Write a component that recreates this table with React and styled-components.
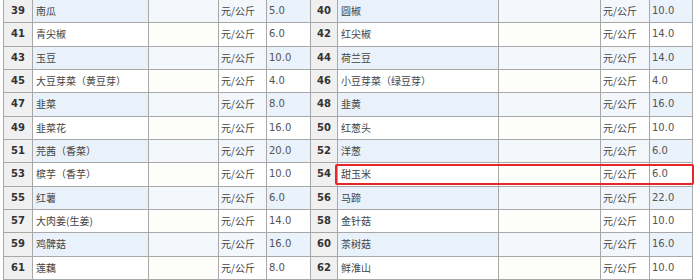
import React from "react";
import styled, { createGlobalStyle, css } from "styled-components";

const Global = createGlobalStyle`
  html, body { margin: 0; padding: 0; background: #fff; }
  body { width: 700px; height: 280px; overflow: hidden; }
`;

const Wrap = styled.div`
  position: relative;
  padding-left: 3px;
  margin-top: -1px;
`;

const Table = styled.table`
  border-collapse: collapse;
  table-layout: fixed;
  width: 690px;
`;

const Row = styled.tr`
  height: 23.33px;
`;

const cellBase = css`
  border: 1px solid #a8a8a8;
  padding: 0 0 0 2px;
  white-space: nowrap;
  overflow: hidden;
  vertical-align: middle;
  line-height: 14px;
`;

const NumCell = styled.td`
  ${cellBase};
  padding: 0;
  text-align: center;
  background: #f0f0f0;
  font-family: "DejaVu Sans", Verdana, sans-serif;
  font-weight: bold;
  font-size: 10px;
  color: #333;
`;

const TextCell = styled.td`
  ${cellBase};
  padding-left: 3px;
  font-family: "Noto Sans CJK SC", "Noto Sans", sans-serif;
  font-size: 10px;
  color: #444;
  background: ${(p) => (p.$striped ? "#e9f1fa" : "#ffffff")};
`;

const BlankCell = styled.td`
  ${cellBase};
  background: ${(p) => (p.$striped ? "#f4f8fc" : "#fdfdf9")};
`;

const UnitCell = styled.td`
  ${cellBase};
  font-family: "Noto Sans CJK SC", "Noto Sans", sans-serif;
  font-size: 10px;
  color: #444;
  background: ${(p) => (p.$striped ? "#f3f7fc" : "#ffffff")};
`;

const ValueCell = styled.td`
  ${cellBase};
  font-family: "DejaVu Sans", Verdana, sans-serif;
  font-size: 10px;
  color: #555;
  background: ${(p) => (p.$striped ? "#eaf2fb" : "#ffffff")};
`;

const Highlight = styled.div`
  position: absolute;
  left: 335px;
  top: 165px;
  width: 359px;
  height: 21px;
  border: 2px solid #e5262a;
  border-radius: 2px;
  box-sizing: border-box;
  pointer-events: none;
`;

const rows = [
  [39, "南瓜", "5.0", 40, "圆椒", "10.0"],
  [41, "青尖椒", "6.0", 42, "红尖椒", "14.0"],
  [43, "玉豆", "10.0", 44, "荷兰豆", "14.0"],
  [45, "大豆芽菜（黄豆芽）", "4.0", 46, "小豆芽菜（绿豆芽）", "4.0"],
  [47, "韭菜", "8.0", 48, "韭黄", "16.0"],
  [49, "韭菜花", "16.0", 50, "红葱头", "10.0"],
  [51, "芫茜（香菜）", "20.0", 52, "洋葱", "6.0"],
  [53, "槟芋（香芋）", "10.0", 54, "甜玉米", "6.0"],
  [55, "红薯", "6.0", 56, "马蹄", "22.0"],
  [57, "大肉姜(生姜)", "14.0", 58, "金针菇", "10.0"],
  [59, "鸡髀菇", "16.0", 60, "茶树菇", "16.0"],
  [61, "莲藕", "8.0", 62, "鲜淮山", "10.0"],
];

const widths = [29, 116, 70, 48, 44, 27, 161, 102, 49, 43];

export default function App() {
  return (
    <>
      <Global />
      <Wrap>
        <Table>
          <colgroup>
            {widths.map((w, i) => (
              <col key={i} style={{ width: w }} />
            ))}
          </colgroup>
          <tbody>
            {rows.map(([n1, a, v1, n2, b, v2], i) => {
              const s = i % 2 === 0;
              return (
                <Row key={n1}>
                  <NumCell>{n1}</NumCell>
                  <TextCell $striped={s}>{a}</TextCell>
                  <BlankCell $striped={s} />
                  <UnitCell $striped={s}>元/公斤</UnitCell>
                  <ValueCell $striped={s}>{v1}</ValueCell>
                  <NumCell>{n2}</NumCell>
                  <TextCell $striped={s}>{b}</TextCell>
                  <BlankCell $striped={s} />
                  <UnitCell $striped={s}>元/公斤</UnitCell>
                  <ValueCell $striped={s}>{v2}</ValueCell>
                </Row>
              );
            })}
          </tbody>
        </Table>
        <Highlight />
      </Wrap>
    </>
  );
}
